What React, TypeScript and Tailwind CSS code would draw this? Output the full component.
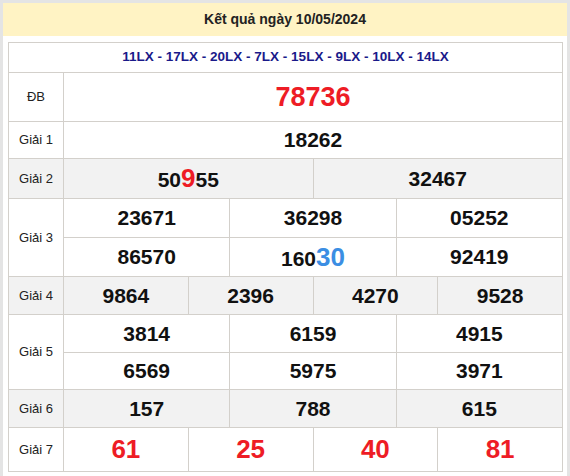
import type { ReactNode } from "react";

const line = "border-[#d3d0cb]";

type Part = { text: string; className?: string };

const Num = ({ parts, size = "text-[21px]" }: { parts: Part[]; size?: string }) => (
  <span className={`font-bold ${size} text-[#111]`}>
    {parts.map((p, i) => (
      <span key={i} className={p.className}>
        {p.text}
      </span>
    ))}
  </span>
);

const Cells = ({ items, h, gray }: { items: ReactNode[]; h: string; gray?: boolean }) => (
  <div className={`flex ${h} ${gray ? "bg-[#f2f2f2]" : ""}`}>
    {items.map((it, i) => (
      <div key={i} className={`flex flex-1 items-center justify-center border-r border-b ${line}`}>
        {it}
      </div>
    ))}
  </div>
);

const Label = ({ children, gray }: { children: ReactNode; gray?: boolean }) => (
  <div
    className={`flex w-[55px] shrink-0 items-center justify-center border-r border-b ${line} text-[13px] text-[#222] ${gray ? "bg-[#f2f2f2]" : ""}`}
  >
    {children}
  </div>
);

const plain = (s: string) => <Num parts={[{ text: s }]} />;
const red = (s: string) => <Num size="text-[26px]" parts={[{ text: s, className: "text-[#ee1c25]" }]} />;

const App = () => {
  return (
    <div
      className="h-[476px] w-[570px] border-x-[3px] border-t-[3px] border-[#e4e4e4] bg-white"
      style={{ fontFamily: '"Liberation Sans", Arial, sans-serif' }}
    >
      <div className="flex h-[33px] items-center justify-center bg-[#fff3c4] text-[14px] font-bold text-[#222]">
        Kết quả ngày 10/05/2024
      </div>

      <div className={`ml-[5px] mt-[6px] w-[555px] border-t border-l ${line}`}>
        <div className={`flex h-[30px] items-center justify-center border-r border-b ${line} text-[13.5px] font-bold text-[#1a1a8a]`}>
          11LX - 17LX - 20LX - 7LX - 15LX - 9LX - 10LX - 14LX
        </div>

        <div className="flex h-[49px]">
          <Label>ĐB</Label>
          <div className={`flex flex-1 items-center justify-center border-r border-b ${line}`}>
            <Num size="text-[27px]" parts={[{ text: "78736", className: "text-[#ee1c25]" }]} />
          </div>
        </div>

        <div className="flex h-[37px]">
          <Label>Giải 1</Label>
          <div className="flex-1">
            <Cells h="h-[37px]" items={[plain("18262")]} />
          </div>
        </div>

        <div className="flex h-[40px]">
          <Label gray>Giải 2</Label>
          <div className="flex-1">
            <Cells
              gray
              h="h-[40px]"
              items={[
                <Num parts={[{ text: "50" }, { text: "9", className: "text-[26px] text-[#ee1c25]" }, { text: "55" }]} />,
                plain("32467"),
              ]}
            />
          </div>
        </div>

        <div className="flex h-[78px]">
          <Label>Giải 3</Label>
          <div className="flex-1">
            <Cells h="h-[39px]" items={[plain("23671"), plain("36298"), plain("05252")]} />
            <Cells
              h="h-[39px]"
              items={[
                plain("86570"),
                <Num parts={[{ text: "160" }, { text: "30", className: "text-[26px] text-[#3b8ee3]" }]} />,
                plain("92419"),
              ]}
            />
          </div>
        </div>

        <div className="flex h-[38px]">
          <Label gray>Giải 4</Label>
          <div className="flex-1">
            <Cells gray h="h-[38px]" items={[plain("9864"), plain("2396"), plain("4270"), plain("9528")]} />
          </div>
        </div>

        <div className="flex h-[75px]">
          <Label>Giải 5</Label>
          <div className="flex-1">
            <Cells h="h-[38px]" items={[plain("3814"), plain("6159"), plain("4915")]} />
            <Cells h="h-[37px]" items={[plain("6569"), plain("5975"), plain("3971")]} />
          </div>
        </div>

        <div className="flex h-[38px]">
          <Label gray>Giải 6</Label>
          <div className="flex-1">
            <Cells gray h="h-[38px]" items={[plain("157"), plain("788"), plain("615")]} />
          </div>
        </div>

        <div className="flex h-[44px]">
          <Label>Giải 7</Label>
          <div className="flex-1">
            <Cells h="h-[44px]" items={[red("61"), red("25"), red("40"), red("81")]} />
          </div>
        </div>
      </div>
    </div>
  );
};

export default App;
